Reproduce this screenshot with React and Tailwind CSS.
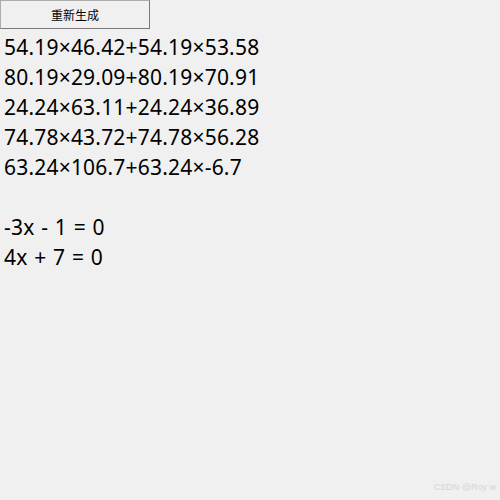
import React from "react";

const lines = [
  "54.19×46.42+54.19×53.58",
  "80.19×29.09+80.19×70.91",
  "24.24×63.11+24.24×36.89",
  "74.78×43.72+74.78×56.28",
  "63.24×106.7+63.24×-6.7",
  "",
  "-3x - 1 = 0",
  "4x + 7 = 0",
];

export default function App() {
  return (
    <div className="relative w-[500px] h-[500px] bg-[#f0f0f0] overflow-hidden">
      {/* Regenerate button */}
      <button className="w-[150px] h-[29px] bg-[#f0f0f0] border border-[#adadad] border-r-[#7a7a7a] border-b-[#7a7a7a] text-[12px] text-black font-['Noto_Sans_CJK_SC',sans-serif] leading-none">
        重新生成
      </button>

      {/* Output text */}
      <div className="mt-[3px] pl-[4px] text-[21px] leading-[30px] tracking-[0.2px] [word-spacing:1px] text-black font-['Noto_Sans','Noto_Sans_CJK_SC',sans-serif]">
        {lines.map((l, i) => (
          <div key={i} className="h-[30px] whitespace-pre">
            {l}
          </div>
        ))}
      </div>

      {/* Watermark */}
      <div className="absolute right-[4px] bottom-[6px] text-[9px] text-[#d4d4d4] font-['Liberation_Sans',sans-serif]">
        CSDN @Roy w
      </div>
    </div>
  );
}
